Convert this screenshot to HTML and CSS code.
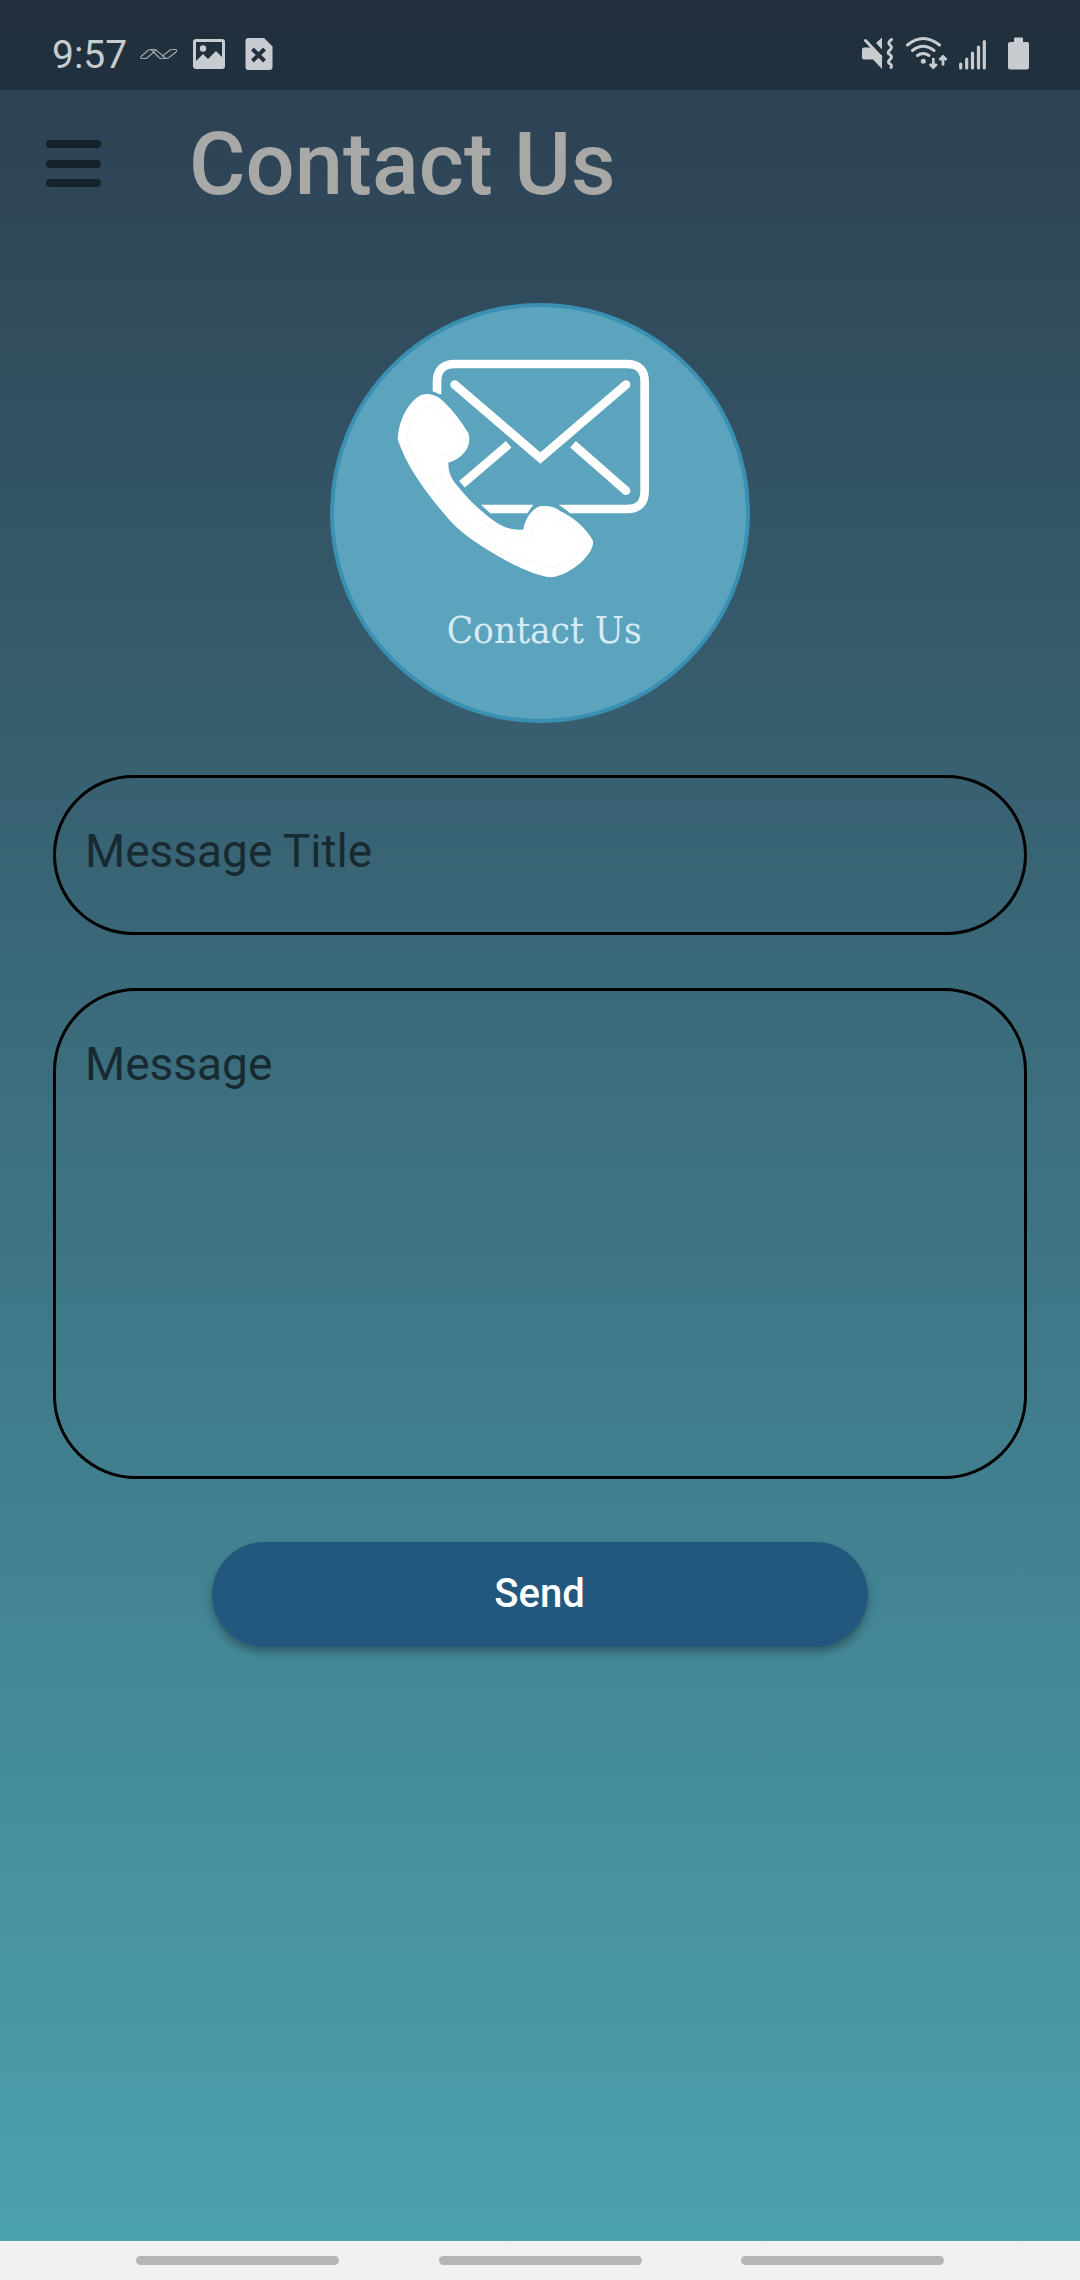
FILE: index.html
```html
<!DOCTYPE html>
<html lang="en">
<head>
<meta charset="utf-8">
<title>Contact Us</title>
<link rel="stylesheet" href="styles.css">
</head>
<body>
<div class="screen">
  <header class="status">
    <div class="status-left">
      <span class="clock">9:57</span>
      <svg class="wave" width="38" height="36" viewBox="140 36 38 36"><path d="M141 56.500L148.500 50Q149.500 49.500 151 49.500H154Q155.500 50 154.500 51.500L147 58Q146 58.500 145 58.500H142Q140 58.500 141 56.500zM151 49.500H155.500L165 57.500Q165 58.500 163.500 58.500H161.500Q160 58.500 159 57.500zM162 56.500L170 50Q171 49.500 172 49.500H175.500Q177.500 50 176 52L169 57.500Q167.500 58.500 166 58.500H162" fill="none" stroke="currentColor" stroke-width="1.100"/></svg>
      <svg class="photo" width="32" height="36" viewBox="193 36 32 36"><path fill="currentColor" fill-rule="evenodd" d="M196 39h26q3 0 3 3v24q0 3-3 3h-26q-3 0-3-3V42q0-3 3-3zM196 42v19l7-7 5 5 8-8 6 6V42z"/><circle cx="203" cy="48.500" r="3.200" fill="currentColor"/></svg>
      <svg width="28" height="36" viewBox="245 36 28 36"><path fill="currentColor" d="M248 38h16l8.500 8.500V67q0 3-3 3H248q-2.500 0-2.500-3V41q0-3 2.500-3z"/><path class="cut" d="M252.500 49l12 12M264.500 49l-12 12"/></svg>
    </div>
    <div class="status-right">
      <svg class="mute" width="32" height="36" viewBox="862 36 32 36"><path fill="currentColor" d="M864 47.500h5.500l12.500 8V69l-9-9.500h-9q-2 0-2-2v-8q0-2 2-2zM876 43l6-5.500V49.500z"/><path d="M865.500 40.500L881 57M891.500 39.500q-4 3-2 5t2 3q0 1-2 3t-1 3q3 2 3 3.500t-2 3q-2 2 0 3.500 3 1.500 1.500 4" fill="none" stroke="currentColor" stroke-width="3" stroke-linecap="round"/></svg>
      <svg class="wifi" width="43" height="36" viewBox="905 36 43 36"><path d="M907.500 45q15.500-13 32 0M912.500 50.500q10.500-8.500 21.500 0M917.500 55.500q5.500-4 11.500 0" fill="none" stroke="currentColor" stroke-width="3" stroke-linecap="round"/><circle cx="923.300" cy="61.300" r="2.500" fill="currentColor"/><path d="M933.300 58v9M929.800 64l3.500 3.500 3.500-3.500M943 65.500V57M939.500 60l3.500-3.500 3.500 3.500" fill="none" stroke="currentColor" stroke-width="2.700"/></svg>
      <svg class="signal" width="27" height="36" viewBox="959 36 27 36"><path d="M960.700 64v4M966.700 59v9M972.500 53v15M978.500 47v21M984.300 41.500V68" stroke="currentColor" stroke-width="3.200" stroke-linecap="round"/></svg>
      <svg width="21" height="36" viewBox="1008 36 21 36"><path fill="currentColor" d="M1014 42v-3.500q0-1 1-1h7q1 0 1 1V42h4q2 0 2 2v23.500q0 2-2 2h-17q-2 0-2-2V44q0-2 2-2z"/></svg>
    </div>
  </header>
  <div class="appbar">
    <div class="menu"><i></i><i></i><i></i></div>
    <h1>Contact Us</h1>
  </div>
  <main class="content">
    <svg class="logo" width="420" height="420" viewBox="30 38 1260 1260">
      <circle cx="660" cy="668" r="624" fill="#5ca4bd" stroke="#3a90b3" stroke-width="12"/>
      <g fill="none" stroke="#fff" stroke-width="26">
        <path d="M351 312V275Q351 221 405 221H920Q974 221 974 275V602Q974 656 920 656H752"/>
        <path d="M404 283L661 503L918 283" stroke-linecap="round"/>
        <path d="M566 462L426 582M759 462L918 601"/>
      </g>
      <circle cx="918" cy="601" r="13" fill="#fff"/>
      <path fill="#fff" d="M483 643H640L622 669H511zM716 643H754V669H750Q735 655 716 643z"/>
      <path fill="#5ca4bd" d="M330 300Q352 306 368 320L362 330H325z"/>
      <path fill="#fff" d="M318 311C345 312 360 322 372 335C400 362 425 395 446 430C452 455 444 478 424 496Q410 508 385 517C385 545 393 565 415 590C445 628 490 670 530 697C560 715 580 720 610 718C613 690 635 655 660 648C685 644 705 650 720 662C760 680 800 715 818 750C824 770 804 795 785 815C755 841 725 857 693 861C640 855 560 815 505 780C455 748 420 725 385 685C322 612 262 535 233 447C235 400 255 350 290 322Q302 312 318 311Z"/>
      <path d="M358 498Q405 485 422 452Q395 390 328 344Q270 372 260 447C295 540 370 625 420 682C490 752 600 808 694 832Q752 815 796 762Q752 705 680 672Q645 680 630 740Q600 750 578 744C480 700 370 600 358 540" fill="none" stroke="#dcecf2" stroke-width="2" stroke-dasharray="9 7"/>
      <text class="logo-text" x="380" y="1057" textLength="585" lengthAdjust="spacingAndGlyphs">Contact Us</text>
    </svg>
    <div class="field">Message Title</div>
    <div class="field area">Message</div>
    <button class="send">Send</button>
  </main>
  <footer class="nav"><i></i><i></i><i></i></footer>
</div>
</body>
</html>
```
FILE: styles.css
```css
* { box-sizing: border-box; }
body { margin: 0; font-family: Roboto, sans-serif; }
svg { display: block; flex: none; }
.screen {
  width: 1080px;
  height: 2280px;
  display: flex;
  flex-direction: column;
  background: linear-gradient(#2c3e50 0, #4ca1af 2241px);
}
.status {
  height: 90px;
  flex: none;
  display: flex;
  justify-content: space-between;
  align-items: flex-start;
  padding: 36px 51px 0 52px;
  background: rgba(0, 0, 0, .25);
  color: #c8ccd0;
}
.status-left, .status-right { display: flex; align-items: flex-start; }
.clock { width: 88px; font-size: 39px; line-height: 39px; white-space: nowrap; }
.wave { margin-right: 15px; color: #a4aab0; }
.photo { margin-right: 20px; }
.cut { stroke: #22303d; stroke-width: 4; }
.mute { margin-right: 11px; }
.wifi { margin-right: 11px; }
.signal { margin-right: 22px; }
.appbar {
  height: 147px;
  flex: none;
  display: flex;
  align-items: center;
  padding: 0 46px;
}
.menu { width: 55px; display: flex; flex-direction: column; gap: 11.500px; margin-right: 88px; }
.menu i { height: 8px; border-radius: 4px; background: #16222a; }
h1 { margin: 0; padding-top: 2px; font-size: 86.700px; line-height: 100px; font-weight: 500; color: #a8a8a7; }
.content { flex: 1; display: flex; flex-direction: column; align-items: center; padding: 66px 52px 0; }
.logo-text { font-family: "DejaVu Serif Condensed", "DejaVu Serif", serif; font-size: 110px; fill: #d6ebf3; }
.field {
  width: 974px;
  height: 160px;
  margin-top: 52px;
  padding: 46px 0 0 29px;
  border: 3px solid #000;
  border-radius: 80px;
  font-size: 46px;
  line-height: 54px;
  color: #172a31;
}
.area { height: 491px; margin-top: 53px; border-radius: 83px; }
.send {
  width: 656px;
  height: 105px;
  margin-top: 63px;
  padding: 0 1px 2px 0;
  border: 0;
  border-radius: 52.500px;
  background: #22587e;
  color: #fff;
  font: 500 40px/103px Roboto, sans-serif;
  box-shadow: 0 5px 9px rgba(0, 0, 0, .32);
}
.nav {
  height: 39px;
  flex: none;
  display: flex;
  gap: 99.500px;
  padding: 15px 0 0 136px;
  background: #f1f1f1;
}
.nav i { width: 203px; height: 9px; border-radius: 4.500px; background: #b5b5b5; }
```
